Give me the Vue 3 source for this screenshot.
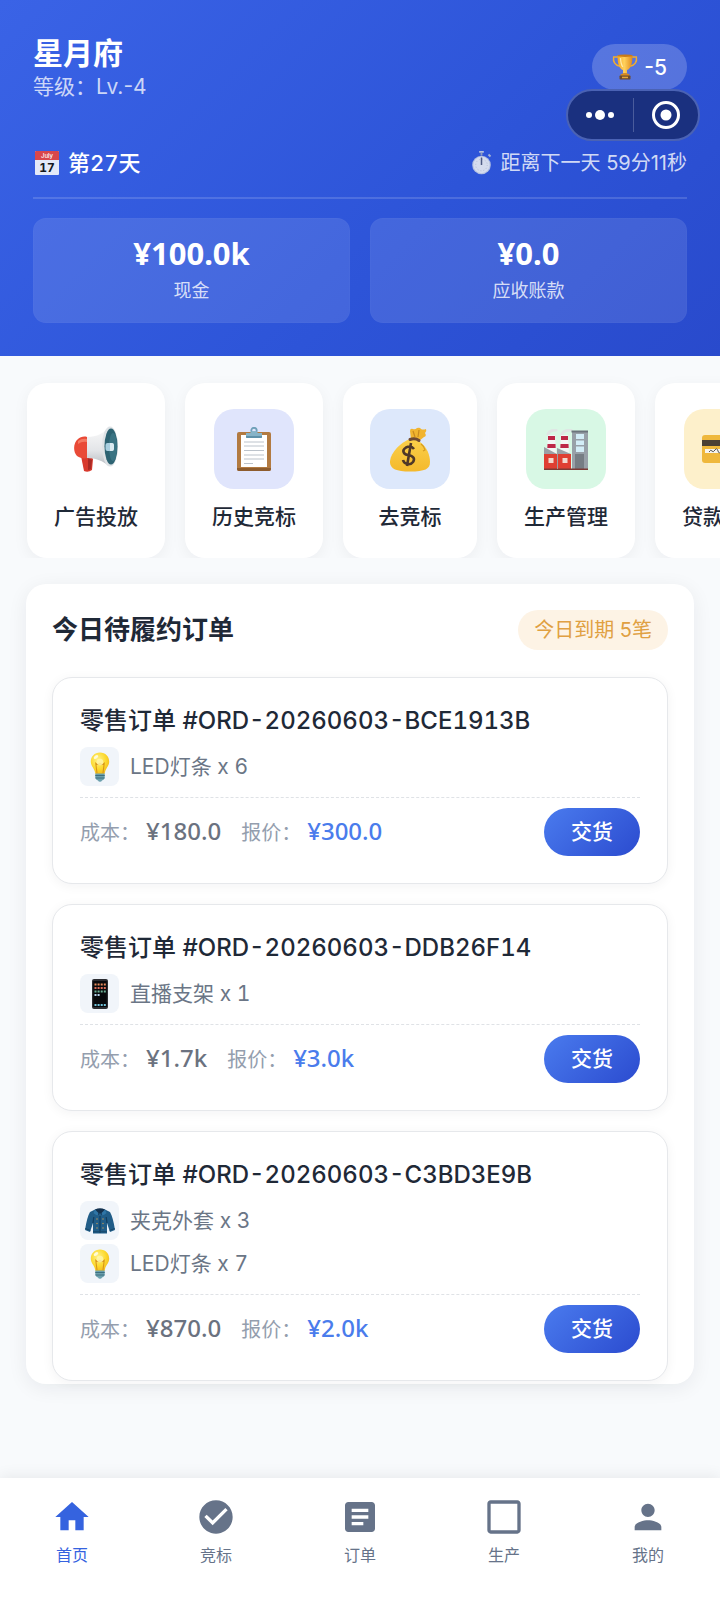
<script setup>
import { ref } from 'vue'

const stats = [
  { value: '¥100.0k', label: '现金' },
  { value: '¥0.0', label: '应收账款' },
]

const actions = [
  { icon: 'megaphone', label: '广告投放', tone: 'plain' },
  { icon: 'clipboard', label: '历史竞标', tone: 'indigo' },
  { icon: 'moneybag', label: '去竞标', tone: 'blue' },
  { icon: 'factory', label: '生产管理', tone: 'green' },
  { icon: 'card', label: '贷款管理', tone: 'amber' },
]

const orders = [
  {
    id: 'ORD-20260603-BCE1913B',
    items: [{ icon: 'bulb', text: 'LED灯条 x 6' }],
    cost: '¥180.0',
    price: '¥300.0',
  },
  {
    id: 'ORD-20260603-DDB26F14',
    items: [{ icon: 'phone', text: '直播支架 x 1' }],
    cost: '¥1.7k',
    price: '¥3.0k',
  },
  {
    id: 'ORD-20260603-C3BD3E9B',
    items: [
      { icon: 'jacket', text: '夹克外套 x 3' },
      { icon: 'bulb', text: 'LED灯条 x 7' },
    ],
    cost: '¥870.0',
    price: '¥2.0k',
  },
]

const tabs = [
  { label: '首页', path: 'M10 20v-6h4v6h5v-8h3L12 3 2 12h3v8z' },
  { label: '竞标', path: 'M12 2C6.48 2 2 6.48 2 12s4.48 10 10 10 10-4.48 10-10S17.52 2 12 2zm-2 15l-5-5 1.41-1.41L10 14.17l7.59-7.59L19 8l-9 9z' },
  { label: '订单', path: 'M19 3H5c-1.1 0-2 .9-2 2v14c0 1.1.9 2 2 2h14c1.1 0 2-.9 2-2V5c0-1.1-.9-2-2-2zm-5 14H7v-2h7v2zm3-4H7v-2h10v2zm0-4H7V7h10v2z' },
  { label: '生产', path: 'M20 2H4c-1.1 0-2 .9-2 2v16c0 1.1.9 2 2 2h16c1.1 0 2-.9 2-2V4c0-1.1-.9-2-2-2zm0 18H4V4h16v16z' },
  { label: '我的', path: 'M12 12c2.21 0 4-1.79 4-4s-1.79-4-4-4-4 1.79-4 4 1.79 4 4 4zm0 2c-2.67 0-8 1.34-8 4v2h16v-2c0-2.66-5.33-4-8-4z' },
]

const activeTab = ref('首页')
</script>

<template>
  <div class="page">
    <svg class="sprite" aria-hidden="true">
      <defs>
        <linearGradient id="g-gold" x1="0" y1="0" x2="1" y2="0">
          <stop offset="0" stop-color="#f3a51f" /><stop offset=".45" stop-color="#ffd15c" /><stop offset="1" stop-color="#e08a1c" />
        </linearGradient>
        <linearGradient id="g-cone" x1="0" y1="0" x2="0" y2="1">
          <stop offset="0" stop-color="#fafafa" /><stop offset=".6" stop-color="#e3e5e8" /><stop offset="1" stop-color="#b9bdc2" />
        </linearGradient>
        <radialGradient id="g-bulb" cx=".4" cy=".35" r=".7">
          <stop offset="0" stop-color="#fff38a" /><stop offset=".6" stop-color="#fcd92f" /><stop offset="1" stop-color="#f2b81c" />
        </radialGradient>
        <linearGradient id="g-bag" x1="0" y1="0" x2="0" y2="1">
          <stop offset="0" stop-color="#fbd04a" /><stop offset="1" stop-color="#f4b92c" />
        </linearGradient>
      </defs>

      <symbol id="i-trophy" viewBox="0 0 26 26">
        <path d="M6 3H1.6c-.8 4.800 1.600 8.600 6.400 9.300M20 3h4.400c.8 4.800-1.600 8.600-6.400 9.300" fill="none" stroke="#f0ad32" stroke-width="1.500" />
        <path d="M5.500 1.500h15c0 7.500-1.500 13.500-5.500 14.500v3.500h-4V16c-4-1-5.500-7-5.500-14.500z" fill="url(#g-gold)" />
        <ellipse cx="13" cy="1.700" rx="7.500" ry="1.200" fill="#c87a18" />
        <path d="M8.500 4c.2 4 .9 7 2.300 9" fill="none" stroke="#ffe9a6" stroke-width="1.300" />
        <path d="M8.500 20.500q4.500-3 9 0V22h-9z" fill="#d98a1d" />
        <rect x="7.500" y="21.500" width="11" height="4" rx=".8" fill="#6d4a2f" />
        <rect x="10" y="22.700" width="6" height="1.500" fill="#e3a83b" />
      </symbol>

      <symbol id="i-watch" viewBox="0 0 20 24">
        <rect x="7" y="0" width="5" height="1.800" rx=".8" fill="#b5c2e0" />
        <rect x="8.600" y="1.500" width="1.800" height="3" fill="#8e9cc2" />
        <path d="M16.500 3.500l2 2" stroke="#a7b4d4" stroke-width="1.800" />
        <circle cx="9.500" cy="14" r="9.300" fill="#b3c0e2" />
        <circle cx="9.500" cy="14" r="8.200" fill="#d5dcee" />
        <circle cx="9.500" cy="14" r="5.800" fill="none" stroke="#b4bed8" stroke-width="1" stroke-dasharray="1 2" />
        <path d="M9.500 6.500V14" stroke="#4d5a83" stroke-width="1.500" />
      </symbol>

      <symbol id="i-megaphone" viewBox="0 0 44 46">
        <path d="M7 30l8-2 4 5-1 11q-4 3-8 1z" fill="#d83a2e" />
        <path d="M14 32l4 2-1 9q-2 1-3 1z" fill="#a92a25" />
        <path d="M13 11c10 0 17-4 22-10v39c-6-5-13-8-22-8z" fill="url(#g-cone)" />
        <path d="M13 11c-3-1-7 0-9 2-5 4-5 13-1 17 3 2 7 3 10 2z" fill="#e94a37" />
        <path d="M4 15q4-3 9-2v3q-5-1-9 2z" fill="#f47a63" />
        <ellipse cx="36" cy="20.500" rx="8" ry="20" fill="#dfe3e6" />
        <ellipse cx="37" cy="20.500" rx="6.500" ry="18" fill="#2d6372" />
        <ellipse cx="39" cy="21" rx="4" ry="14" fill="#3b7483" />
        <rect x="31.500" y="17" width="8" height="8" rx="2" fill="#a8cfe0" />
        <path d="M36 17h2a2 2 0 0 1 2 2v4a2 2 0 0 1-2 2h-2z" fill="#dcebf1" />
      </symbol>

      <symbol id="i-clipboard" viewBox="0 0 34 44">
        <rect x="0" y="5" width="34" height="39" rx="2" fill="#b27a41" />
        <path d="M0 41h34v1a2 2 0 0 1-2 2H2a2 2 0 0 1-2-2z" fill="#8e5c2e" />
        <path d="M4 8h26v32H4z" fill="#fff" />
        <path d="M7 15h20M7 19h20M7 23.500h20M7 28h20M7 32h20M7 36.500h9" stroke="#bcc3cb" stroke-width="1" />
        <circle cx="17" cy="3.500" r="2.700" fill="none" stroke="#6fa0b8" stroke-width="1.800" />
        <path d="M9 6h4q1-2 4-2t4 2h4v4q0 1-1 1H10q-1 0-1-1z" fill="#86b3c7" />
        <path d="M9 9h16v1q0 1-1 1H10q-1 0-1-1z" fill="#5e91a9" />
      </symbol>

      <symbol id="i-moneybag" viewBox="0 0 40 45">
        <path d="M21 12L20 4q0-3 3-2 2 1 4-1 3-1 4 1 2 1 5 0 1 2-1 4 2 3-1 4l-5 4z" fill="#f1b42f" />
        <path d="M23 4l2 6M29 3l-1 7" stroke="#c98a1e" stroke-width="1.200" fill="none" />
        <path d="M20 12c-9 3-19 13-20 22-.5 7 5 10.500 20 10.500S40 42 40 35c0-7-3-15-10-20-3-2-6-3-10-3z" fill="url(#g-bag)" />
        <path d="M31 17q3 2 4 6l-2 1" stroke="#d49a23" stroke-width="1.200" fill="none" />
        <path d="M20 12.500q5-2 9 1" stroke="#704a32" stroke-width="3" stroke-linecap="round" fill="none" />
        <path d="M24 22q-3-4-8-1.500c-5 3-2 7 2 7.500 6 1 7 4 5 7-3 4-9 2-10-2M21 16l-4 23" stroke="#4f3828" stroke-width="2.600" fill="none" />
      </symbol>

      <symbol id="i-factory" viewBox="0 0 44 41">
        <path d="M4 5q2-4 8-4M18 5q2-4 9-4" stroke="#dfe6e4" stroke-width="3" fill="none" stroke-linecap="round" />
        <path d="M4 6h7l1 19H3zM17 6h7l1 19h-9z" fill="#f4f4f4" />
        <path d="M4 7h7v4H4zM3.500 15h8l.2 4H3.300zM17 7h7v4h-7zM16.500 15h8l.2 4h-8.400z" fill="#bd2747" />
        <rect x="28" y="2" width="16" height="39" fill="#98a0a8" />
        <rect x="27.500" y="1.500" width="17" height="2" fill="#6c747c" />
        <path d="M32 5h8v5h-8zM32 11.500h8V16h-8zM32 17.500h8V23h-8z" fill="#d3edf7" />
        <rect x="31" y="25" width="9" height="15" fill="#767d84" />
        <path d="M0 18l13 7v-6l14 6v14H0z" fill="#9b9fa5" />
        <path d="M0 25h13v15H0zM14 25h13v15H14z" fill="#df3e32" />
        <path d="M4.500 29h5v5h-5zM18.500 29h5v5h-5z" fill="#f2d8cf" />
        <path d="M0 39.500h44V41H0z" fill="#7c3a35" />
      </symbol>

      <symbol id="i-card" viewBox="0 0 44 28">
        <rect width="44" height="28" rx="3" fill="#efb83c" />
        <rect y="5" width="44" height="6" fill="#4b4034" />
        <rect x="3" y="14" width="26" height="4" fill="#f8f5ee" />
        <path d="M7 17q2-3 3-1t3-1 3 1 4-1" stroke="#555" stroke-width="1" fill="none" />
      </symbol>

      <symbol id="i-bulb" viewBox="0 0 20 30">
        <path d="M10 .5C4.500.5.800 4.500.800 9.500c0 4.500 3.200 6.500 4.200 10.500l.5 2h9l.5-2c1-4 4.200-6 4.200-10.500C19.200 4.500 15.500.5 10 .5z" fill="url(#g-bulb)" />
        <path d="M7 21L5.800 11.500q2 2 4.200 0 2 2 4.200 0L13 21" fill="none" stroke="#d99517" stroke-width="1.100" />
        <circle cx="10" cy="10" r="3.300" fill="#fff6ad" opacity=".8" />
        <ellipse cx="6" cy="5" rx="2.500" ry="1.600" transform="rotate(-35 6 5)" fill="#fffbd8" />
        <path d="M5.300 21.500h9.400v4.500q-1 2-2.700 2.500-.5 1.200-2 1.200T8 28.500Q6.300 28 5.300 26z" fill="#6ba0ad" />
        <path d="M5.300 23.500h9.400M5.500 26h9" stroke="#3e6f80" stroke-width="1" />
      </symbol>

      <symbol id="i-phone" viewBox="0 0 16 30">
        <rect width="16" height="30" rx="2" fill="#2c2d31" />
        <rect x="1.200" y="2" width="13.600" height="26" fill="#08090c" />
        <path d="M2.500 5.500h11.500" stroke="#e88b5a" stroke-width="2" stroke-dasharray="2 1.100" />
        <path d="M2.500 9h11.500" stroke="#dc6d58" stroke-width="2" stroke-dasharray="2 1.100" />
        <path d="M2.500 12.500h11.500" stroke="#6eb296" stroke-width="2" stroke-dasharray="2 1.100" />
        <path d="M2.500 16h5.200" stroke="#b8d4ee" stroke-width="2" stroke-dasharray="2 1.100" />
        <path d="M2.500 26h11.500" stroke="#72c5dc" stroke-width="2" stroke-dasharray="2 1.100" />
      </symbol>

      <symbol id="i-jacket" viewBox="0 0 30 26">
        <path d="M10 1.500L5 4Q2 9 0 22l5 2 3-9v10.500h14V15l3 9 5-2Q28 9 25 4l-5-2.500z" fill="#215d88" />
        <path d="M8 15l.8-6M22 15l-.8-6M15 8v17" stroke="#133e60" stroke-width="1.200" fill="none" />
        <path d="M10 1.500Q15-1 20 1.500L18 8l-3-3-3 3z" fill="#14324f" />
        <path d="M10 1.500L8.500 5l4 3 1-3zM20 1.500L21.500 5l-4 3-1-3z" fill="#2f75a6" />
        <path d="M12 11v.1M18 11v.1M12 15.500v.1M18 15.500v.1M12 20v.1M18 20v.1" stroke="#b8965a" stroke-width="1.500" stroke-linecap="round" />
        <path d="M.3 20.500l5 2M29.700 20.500l-5 2M8 23.800h14" stroke="#174769" stroke-width="1" />
      </symbol>
    </svg>

    <header class="hero">
      <div class="capsule">
        <button type="button" aria-label="更多">
          <svg width="30" height="12" viewBox="0 0 30 12"><g fill="#fff"><circle cx="4" cy="6" r="3" /><circle cx="15" cy="6" r="5" /><circle cx="26" cy="6" r="3" /></g></svg>
        </button>
        <span class="capsule-line"></span>
        <button type="button" aria-label="关闭">
          <svg width="28" height="28" viewBox="0 0 28 28"><circle cx="14" cy="14" r="12.500" fill="none" stroke="#fff" stroke-width="3" /><circle cx="14" cy="14" r="5.500" fill="#fff" /></svg>
        </button>
      </div>

      <div class="hero-top">
        <div>
          <h1>星月府</h1>
          <p class="level">等级：Lv.-4</p>
        </div>
        <div class="score">
          <svg class="i26"><use href="#i-trophy" /></svg>
          <span>-5</span>
        </div>
      </div>

      <div class="day-row">
        <span class="day">
          <svg class="i24" viewBox="0 0 24 24" aria-hidden="true">
            <rect x="0" y="0" width="24" height="24" rx="1" fill="#e3e9f8" />
            <path d="M1 0h22a1 1 0 0 1 1 1v8H0V1a1 1 0 0 1 1-1z" fill="#d9474b" />
            <text x="12" y="7" text-anchor="middle" font-size="6" font-weight="500" fill="#fff">July</text>
            <text x="12" y="21" text-anchor="middle" font-size="12" font-weight="700" fill="#15181f">17</text>
          </svg>
          第27天
        </span>
        <span class="timer"><svg class="i20"><use href="#i-watch" /></svg>距离下一天 59分11秒</span>
      </div>

      <div class="stats">
        <div v-for="s in stats" :key="s.label" class="stat">
          <strong>{{ s.value }}</strong>
          <span>{{ s.label }}</span>
        </div>
      </div>
    </header>

    <main>
      <nav class="actions" aria-label="快捷入口">
        <button v-for="a in actions" :key="a.label" type="button" class="action">
          <span class="tile" :class="a.tone"><svg :class="a.icon"><use :href="'#i-' + a.icon" /></svg></span>
          <span>{{ a.label }}</span>
        </button>
      </nav>

      <section class="panel">
        <div class="panel-head">
          <h2>今日待履约订单</h2>
          <span class="due">今日到期 5笔</span>
        </div>
        <div class="orders">
          <article v-for="o in orders" :key="o.id" class="order">
            <h3>零售订单 #{{ o.id }}</h3>
            <ul>
              <li v-for="i in o.items" :key="i.text">
                <span class="thumb"><svg :class="i.icon"><use :href="'#i-' + i.icon" /></svg></span>
                <span>{{ i.text }}</span>
              </li>
            </ul>
            <div class="order-foot">
              <div class="pair"><span>成本：</span><b>{{ o.cost }}</b></div>
              <div class="pair price"><span>报价：</span><b>{{ o.price }}</b></div>
              <button type="button" class="deliver">交货</button>
            </div>
          </article>
        </div>
      </section>
    </main>

    <nav class="tabbar" aria-label="主导航">
      <a v-for="t in tabs" :key="t.label" href="#" :class="{ active: t.label === activeTab }" @click.prevent="activeTab = t.label">
        <svg viewBox="0 0 24 24" width="40" height="40"><path :d="t.path" fill="currentColor" /></svg>
        <span>{{ t.label }}</span>
      </a>
    </nav>
  </div>
</template>

<style>
body {
  background: #f8fafc;
}
</style>

<style scoped>
.page {
  min-height: 100vh;
  display: flex;
  flex-direction: column;
  background: #f8fafc;
  color: #1f2937;
  font-family: Inter, "Noto Sans CJK SC", sans-serif;
}
h1, h2, h3, p, ul {
  margin: 0;
  padding: 0;
  font-weight: 500;
}
button {
  border: 0;
  padding: 0;
  background: none;
  color: inherit;
  font: inherit;
}
svg {
  display: block;
}
.sprite {
  position: absolute;
  width: 0;
  height: 0;
}

.hero {
  position: relative;
  padding: 33px;
  color: #fff;
  background: linear-gradient(135deg, #3a63e6, #2d54d8 60%, #294acc);
}
.hero-top {
  display: flex;
  justify-content: space-between;
  align-items: center;
}
h1 {
  font-size: 30px;
  line-height: 40px;
  font-weight: 700;
}
.level {
  font-size: 21px;
  line-height: 28px;
  font-weight: 400;
  color: rgba(255, 255, 255, 0.75);
}
.score {
  display: flex;
  align-items: center;
  gap: 6px;
  height: 46px;
  padding: 0 20px;
  border-radius: 23px;
  background: rgba(255, 255, 255, 0.2);
  font-size: 21px;
  font-weight: 500;
}
.i26 { width: 26px; height: 26px; }
.i24 { width: 24px; height: 24px; }
.i20 { width: 20px; height: 24px; }
.capsule {
  position: absolute;
  top: 89px;
  right: 20px;
  box-sizing: border-box;
  width: 134px;
  height: 52px;
  display: flex;
  align-items: center;
  border: 2px solid #4a62b4;
  border-radius: 26px;
  background: #1a307f;
}
.capsule button {
  flex: 1;
  height: 100%;
  display: grid;
  place-items: center;
}
.capsule-line {
  width: 1px;
  height: 34px;
  background: #4a5c9c;
}
.day-row {
  display: flex;
  justify-content: space-between;
  align-items: center;
  margin-top: 47px;
  padding-bottom: 19px;
  border-bottom: 2px solid rgba(255, 255, 255, 0.15);
  line-height: 30px;
}
.day, .timer {
  display: flex;
  align-items: center;
  gap: 9px;
}
.day {
  padding-left: 2px;
  font-size: 22px;
  font-weight: 500;
  font-variant-numeric: tabular-nums;
}
.timer {
  font-size: 20px;
  color: rgba(255, 255, 255, 0.8);
}
.stats {
  display: grid;
  grid-template-columns: 1fr 1fr;
  gap: 20px;
  margin-top: 19px;
}
.stat {
  display: flex;
  flex-direction: column;
  align-items: center;
  gap: 6px;
  padding: 15px 15px 18px;
  border: 1px solid rgba(255, 255, 255, 0.02);
  border-radius: 13px;
  background: rgba(255, 255, 255, 0.11);
}
.stat strong {
  font-family: "Noto Sans", "Noto Sans CJK SC", sans-serif;
  font-size: 31px;
  line-height: 38px;
}
.stat span {
  font-size: 18px;
  line-height: 26px;
  color: rgba(255, 255, 255, 0.8);
}

main {
  flex: 1;
}
.actions {
  display: flex;
  gap: 20px;
  padding: 27px 27px 0;
  overflow: hidden;
}
.action {
  flex: none;
  display: flex;
  flex-direction: column;
  align-items: center;
  gap: 13px;
  padding: 26px 27px;
  border-radius: 20px;
  background: #fff;
  box-shadow: 0 4px 16px rgba(15, 23, 42, 0.05);
  font-size: 21px;
  line-height: 30px;
  font-weight: 500;
}
.tile {
  width: 80px;
  height: 80px;
  display: grid;
  place-items: center;
  border-radius: 20px;
}
.indigo { background: #e0e5fc; }
.blue { background: #dde8fb; }
.green { background: #d8f8e5; }
.amber { background: #fdf0cb; }
.megaphone { width: 44px; height: 46px; }
.clipboard { width: 34px; height: 44px; }
.moneybag { width: 40px; height: 45px; }
.factory { width: 44px; height: 41px; }
.card { width: 44px; height: 28px; }

.panel {
  margin: 26px 26px 0;
  padding: 26px 26px 3px;
  border-radius: 20px;
  background: #fff;
  box-shadow: 0 4px 20px rgba(15, 23, 42, 0.07);
}
.panel-head {
  display: flex;
  justify-content: space-between;
  align-items: center;
}
h2 {
  font-size: 26px;
  line-height: 40px;
  font-weight: 700;
}
.due {
  padding: 0 16px;
  border-radius: 20px;
  background: #fdf3e5;
  color: #e0a042;
  font-size: 20px;
  line-height: 40px;
}
.orders {
  display: flex;
  flex-direction: column;
  gap: 20px;
  margin-top: 27px;
}
.order {
  padding: 27px;
  border: 1px solid #e6e8eb;
  border-radius: 20px;
  background: #fff;
  box-shadow: 0 2px 12px rgba(15, 23, 42, 0.05);
}
h3 {
  font-size: 24px;
  line-height: 32px;
  font-variant-numeric: tabular-nums;
}
ul {
  display: flex;
  flex-direction: column;
  gap: 4px;
  margin: 10px 0 11px;
  list-style: none;
}
li {
  display: flex;
  align-items: center;
  gap: 11px;
  font-size: 21px;
  line-height: 30px;
  font-weight: 400;
  font-variant-numeric: tabular-nums;
  color: #6b7686;
}
.thumb {
  width: 39px;
  height: 39px;
  display: grid;
  place-items: center;
  border-radius: 8px;
  background: #f1f5fa;
}
.bulb { width: 20px; height: 30px; }
.phone { width: 16px; height: 30px; }
.jacket { width: 30px; height: 26px; }
.order-foot {
  display: flex;
  align-items: center;
  gap: 20px;
  padding-top: 10px;
  border-top: 1px dashed #dfe2e6;
}
.pair {
  display: flex;
  align-items: baseline;
  gap: 6px;
  line-height: 32px;
}
.pair span {
  font-size: 20px;
  color: #949eae;
}
.pair b {
  font-family: "Noto Sans", sans-serif;
  font-size: 24px;
  font-weight: 500;
  color: #6b7280;
}
.pair.price b {
  color: #4a7cec;
}
.deliver {
  margin-left: auto;
  padding: 0 27px;
  border-radius: 24px;
  background: linear-gradient(135deg, #4a7bee, #2b4bcf);
  color: #fff;
  font-size: 21px;
  line-height: 48px;
  font-weight: 500;
}

.tabbar {
  display: grid;
  grid-template-columns: repeat(5, 1fr);
  padding: 19px 0 32px;
  background: #fff;
  box-shadow: 0 -2px 14px rgba(0, 0, 0, 0.07);
}
.tabbar a {
  display: flex;
  flex-direction: column;
  align-items: center;
  gap: 7px;
  color: #667389;
  text-decoration: none;
  font-size: 16px;
  line-height: 22px;
}
.tabbar a.active {
  color: #3563df;
}
</style>
